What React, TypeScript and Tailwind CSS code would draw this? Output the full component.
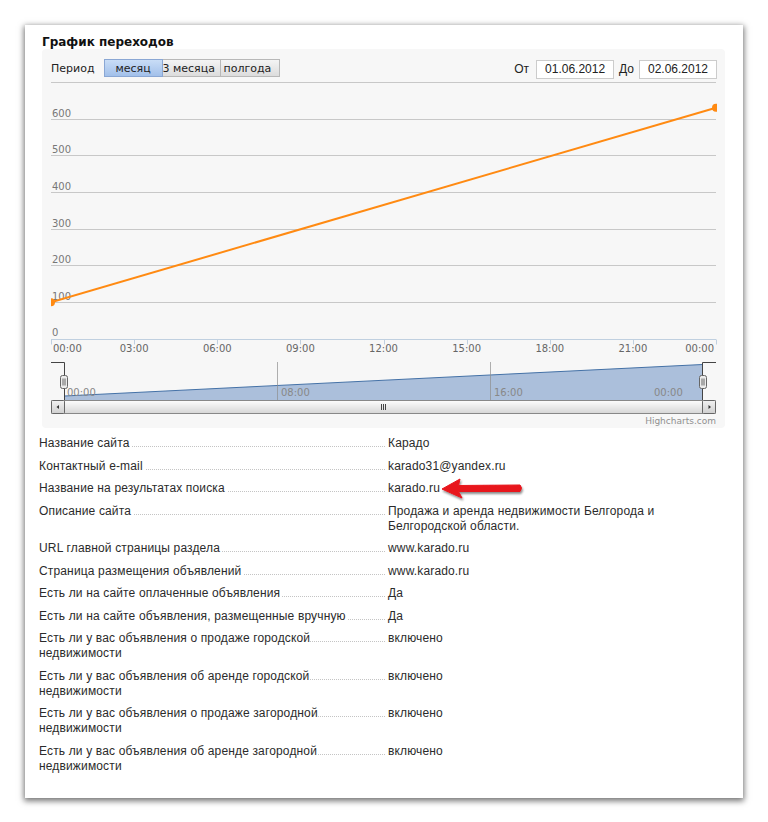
import React from "react";

const rows: [string, string][] = [
  ["Название сайта", "Карадо"],
  ["Контактный e-mail", "karado31@yandex.ru"],
  ["Название на результатах поиска", "karado.ru"],
  ["Описание сайта", "Продажа и аренда недвижимости Белгорода и Белгородской области."],
  ["URL главной страницы раздела", "www.karado.ru"],
  ["Страница размещения объявлений", "www.karado.ru"],
  ["Есть ли на сайте оплаченные объявления", "Да"],
  ["Есть ли на сайте объявления, размещенные вручную", "Да"],
  ["Есть ли у вас объявления о продаже городской недвижимости", "включено"],
  ["Есть ли у вас объявления об аренде городской недвижимости", "включено"],
  ["Есть ли у вас объявления о продаже загородной недвижимости", "включено"],
  ["Есть ли у вас объявления об аренде загородной недвижимости", "включено"],
];

function Chart() {
  const grid = [
    { y: 82.5, l: "" },
    { y: 119.5, l: "600" },
    { y: 155.5, l: "500" },
    { y: 192.5, l: "400" },
    { y: 229.5, l: "300" },
    { y: 265.5, l: "200" },
    { y: 302.5, l: "100" },
  ];
  const ticks = [51, 134.1, 217.3, 300.4, 383.5, 466.6, 549.8, 632.9, 716];
  const tl = ["03:00", "06:00", "09:00", "12:00", "15:00", "18:00", "21:00"];
  const font = "DejaVu Sans, sans-serif";
  return (
    <svg width={683} height={348} viewBox="42 80 683 348" className="block">
      <defs>
        <clipPath id="plotclip">
          <rect x={51} y={80} width={666} height={262} />
        </clipPath>
        <linearGradient id="thumb" x1="0" y1="0" x2="0" y2="1">
          <stop offset="0" stopColor="#fdfdfd" />
          <stop offset="1" stopColor="#d6d6d6" />
        </linearGradient>
        <linearGradient id="btn" x1="0" y1="0" x2="0" y2="1">
          <stop offset="0" stopColor="#f2f2f2" />
          <stop offset="1" stopColor="#cfcfcf" />
        </linearGradient>
      </defs>
      {grid.map((g) => (
        <g key={g.y}>
          <line x1={51} x2={716} y1={g.y} y2={g.y} stroke="#c8c8c8" strokeWidth={1} />
          {g.l && (
            <text x={52} y={g.y - 3} fontFamily={font} fontSize={10} fill="#777">
              {g.l}
            </text>
          )}
        </g>
      ))}
      <text x={52} y={336} fontFamily={font} fontSize={10} fill="#777">
        0
      </text>
      <line x1={51} x2={716} y1={339.5} y2={339.5} stroke="#c0d0e0" strokeWidth={1} />
      {ticks.map((x) => (
        <line key={x} x1={Math.round(x) + 0.5} x2={Math.round(x) + 0.5} y1={339.5} y2={344.5} stroke="#c0d0e0" strokeWidth={1} />
      ))}
      <text x={53} y={351.7} fontFamily={font} fontSize={10} fill="#666">
        00:00
      </text>
      {tl.map((t, i) => (
        <text key={t} x={ticks[i + 1]} y={351.7} textAnchor="middle" fontFamily={font} fontSize={10} fill="#666">
          {t}
        </text>
      ))}
      <text x={714} y={351.7} textAnchor="end" fontFamily={font} fontSize={10} fill="#666">
        00:00
      </text>
      <g clipPath="url(#plotclip)">
        <line x1={51} y1={302.3} x2={716} y2={107.7} stroke="#ff8a12" strokeWidth={2} />
        <circle cx={51} cy={302.3} r={4} fill="#ff8a12" />
        <circle cx={716} cy={107.7} r={4} fill="#ff8a12" />
      </g>

      {/* navigator */}
      <path d="M64.5,396 L702.5,364.5 L702.5,400 L64.5,400 Z" fill="#abbfdb" />
      <path d="M64.5,396 L702.5,364.5" fill="none" stroke="#4572a7" strokeWidth={1} />
      <line x1={277.5} x2={277.5} y1={362} y2={400} stroke="#8f8f8f" strokeOpacity={0.7} />
      <line x1={490.5} x2={490.5} y1={362} y2={400} stroke="#8f8f8f" strokeOpacity={0.7} />
      <text x={67} y={396} fontFamily={font} fontSize={10} fill="#888">00:00</text>
      <text x={281} y={396} fontFamily={font} fontSize={10} fill="#888">08:00</text>
      <text x={494} y={396} fontFamily={font} fontSize={10} fill="#888">16:00</text>
      <text x={654} y={396} fontFamily={font} fontSize={10} fill="#888">00:00</text>
      <path d="M51,362.5 H64.5 V400 M702.5,400 V362.5 H716" fill="none" stroke="#444" strokeWidth={1} />
      {[60.5, 699.5].map((x) => (
        <g key={x}>
          <rect x={x} y={375.5} width={7} height={13} rx={2} fill="#ebebeb" stroke="#666" />
          <line x1={x + 2.5} x2={x + 2.5} y1={378.5} y2={385.5} stroke="#666" />
          <line x1={x + 4.5} x2={x + 4.5} y1={378.5} y2={385.5} stroke="#666" />
        </g>
      ))}

      {/* scrollbar */}
      <rect x={51.5} y={400.5} width={664} height={13} fill="#eeeeee" stroke="#bbb" />
      <rect x={64.5} y={400.5} width={638} height={13} fill="url(#thumb)" stroke="#888" />
      <line x1={381.5} x2={381.5} y1={404} y2={410} stroke="#444" />
      <line x1={383.5} x2={383.5} y1={404} y2={410} stroke="#444" />
      <line x1={385.5} x2={385.5} y1={404} y2={410} stroke="#444" />
      <rect x={51.5} y={400.5} width={13} height={13} rx={1} fill="url(#btn)" stroke="#666" />
      <path d="M56.5,407 L59,405 L59,409 Z" fill="#333" />
      <rect x={702.5} y={400.5} width={13} height={13} rx={1} fill="url(#btn)" stroke="#666" />
      <path d="M711,407 L708.5,405 L708.5,409 Z" fill="#333" />

      <text x={716} y={424} textAnchor="end" fontFamily={font} fontSize={9} fill="#909090">
        Highcharts.com
      </text>
    </svg>
  );
}

export default function App() {
  return (
    <div className="relative w-[768px] h-[822px] bg-white overflow-hidden">
      <div className="pt-[25px] pl-[25px]">
        <div className="w-[718px] bg-white shadow-[0_2px_6px_1px_rgba(0,0,0,0.55)] pt-[10px] pb-[24px]">
          <div className="pl-[17px] h-[14px] leading-[14px] text-[12px] font-bold text-[#111] font-['DejaVu_Sans',sans-serif]">
            График переходов
          </div>
          <div className="ml-[17px] w-[683px] bg-[#f7f7f7] rounded-[4px]">
            <div className="h-[31px] pt-[10px] pl-[9px] pr-[8px] flex items-start">
              <div className="h-[18px] leading-[18px] pt-[1px] text-[11px] text-[#222] font-['DejaVu_Sans',sans-serif]">
                Период
              </div>
              <div className="ml-[9px] flex font-['DejaVu_Sans',sans-serif] text-[11px] text-[#222]">
                <div className="w-[59px] h-[18px] leading-[17px] text-center border border-[#8aa7d4] bg-gradient-to-b from-[#c9ddf6] to-[#a2c0ea]">
                  месяц
                </div>
                <div className="w-[58px] h-[18px] leading-[17px] pl-[0px] whitespace-nowrap border-y border-r border-[#b8b8b8] bg-gradient-to-b from-[#f4f4f4] to-[#dcdcdc]">
                  3 месяца
                </div>
                <div className="w-[59px] h-[18px] leading-[17px] pl-[3px] whitespace-nowrap border-y border-r border-[#b8b8b8] bg-gradient-to-b from-[#f4f4f4] to-[#dcdcdc]">
                  полгода
                </div>
              </div>
              <div className="ml-auto flex items-center h-[20px] text-[12px] text-[#222] font-['Liberation_Sans',Arial,sans-serif]">
                <span>От</span>
                <div className="ml-[7px] w-[78px] h-[19px] leading-[17px] bg-white border border-[#cccccc] text-center">
                  01.06.2012
                </div>
                <span className="ml-[5px]">До</span>
                <div className="ml-[5px] w-[78px] h-[19px] leading-[17px] bg-white border border-[#cccccc] text-center">
                  02.06.2012
                </div>
              </div>
            </div>
            <Chart />
          </div>
          <div className="ml-[14px] mt-[8px] flex flex-col gap-[7.5px] text-[12px] leading-[15px] tracking-[0.15px] text-[#2b2b2b] font-['Liberation_Sans',Arial,sans-serif]">
            {rows.map(([k, v]) => (
              <div key={k} className="flex">
                <div className="relative w-[346px] shrink-0">
                  <div className="absolute left-0 right-0 top-[10px] border-b border-dotted border-[#c4c4c4]" />
                  <span className="relative bg-white pr-[2px]">{k}</span>
                </div>
                <div className="ml-[3px] w-[300px]">{v}</div>
              </div>
            ))}
          </div>
        </div>
      </div>
      <svg
        className="absolute left-[436px] top-[472px]"
        width={94}
        height={34}
        viewBox="0 0 94 34"
      >
        <defs>
          <filter id="ash" x="-20%" y="-40%" width="140%" height="180%">
            <feDropShadow dx="1" dy="2" stdDeviation="1.3" floodColor="#000" floodOpacity="0.45" />
          </filter>
        </defs>
        <path
          d="M6,17 L24,7 L22.5,13.5 L84,13 Q87,16 84,19.5 L22.5,19.5 L26,26 Z"
          fill="#e8141b"
          stroke="#e8141b"
          strokeWidth={1}
          strokeLinejoin="round"
          filter="url(#ash)"
        />
      </svg>
    </div>
  );
}
